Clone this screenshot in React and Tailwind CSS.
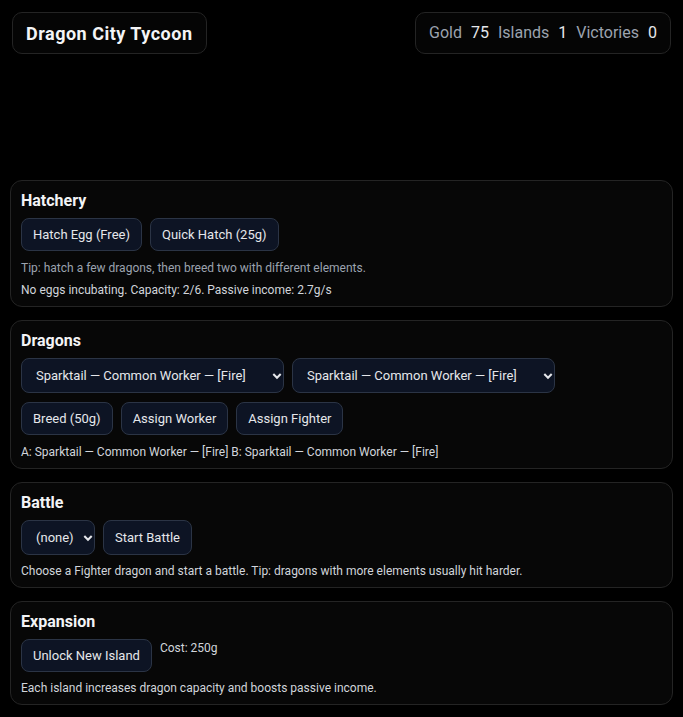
import React from 'react';

function Chevron() {
    return (
        <svg className="pointer-events-none absolute right-[2px] top-1/2 -translate-y-1/2" width="10" height="8" viewBox="0 0 10 8">
            <path d="M1.3 2 L5 5.8 L8.7 2" fill="none" stroke="#e5e7eb" strokeWidth="2" />
        </svg>
    );
}

function Select({ value, width }) {
    return (
        <div className={`relative ${width}`}>
            <select
                defaultValue={value}
                className="h-[35px] w-full appearance-none rounded-lg border border-[#2b3445] bg-[#0d1424] pl-[14px] pr-[14px] text-[13px] text-[#e5e7eb] outline-none"
            >
                <option>{value}</option>
            </select>
            <Chevron />
        </div>
    );
}

function Btn({ children, tall }) {
    return (
        <button className={`rounded-lg border border-[#2b3445] bg-[#0d1424] px-[11px] text-[13px] text-[#e5e7eb] ${tall ? 'h-[35px]' : 'h-[33px]'}`}>
            {children}
        </button>
    );
}

function Card({ title, children }) {
    return (
        <section className="rounded-xl border border-[#242424] bg-[#070707] px-[10px] pt-[10px] pb-[8px]">
            <h2 className="mb-[7px] text-[16px] font-bold leading-5 text-[#f3f4f6]">{title}</h2>
            {children}
        </section>
    );
}

export default function App() {
    const dragon = 'Sparktail — Common Worker — [Fire]';
    return (
        <div className="min-h-[717px] bg-black px-[10px] pb-[10px] text-[#e5e7eb]" style={{ fontFamily: 'Roboto, "Liberation Sans", sans-serif' }}>
            <header className="flex items-start justify-between px-[2px] pt-[12px]">
                <div className="flex h-[42px] items-center rounded-[10px] border border-[#242424] bg-[#050505] px-[13px]">
                    <h1 className="text-[18px] font-bold tracking-[0.5px] text-[#f3f4f6]">Dragon City Tycoon</h1>
                </div>
                <div className="flex h-[42px] items-center gap-[9px] rounded-[10px] border border-[#242424] bg-[#050505] px-[13px] text-[16px]">
                    <span className="text-[#9ca3af]">Gold</span>
                    <span className="text-[#e5e7eb]">75</span>
                    <span className="text-[#9ca3af]">Islands</span>
                    <span className="text-[#e5e7eb]">1</span>
                    <span className="text-[#9ca3af]">Victories</span>
                    <span className="text-[#e5e7eb]">0</span>
                </div>
            </header>

            <div className="h-[126px]" />

            <div className="flex flex-col gap-[13px]">
                <Card title="Hatchery">
                    <div className="flex gap-2">
                        <Btn>Hatch Egg (Free)</Btn>
                        <Btn>Quick Hatch (25g)</Btn>
                    </div>
                    <p className="mt-[9px] text-[12px] leading-4 text-[#9ca3af]">Tip: hatch a few dragons, then breed two with different elements.</p>
                    <p className="mt-[6px] text-[12px] leading-4 text-[#d1d5db]">No eggs incubating. Capacity: 2/6. Passive income: 2.7g/s</p>
                </Card>

                <Card title="Dragons">
                    <div className="flex gap-2">
                        <Select value={dragon} width="w-[263px]" />
                        <Select value={dragon} width="w-[263px]" />
                    </div>
                    <div className="mt-[9px] flex gap-2">
                        <Btn>Breed (50g)</Btn>
                        <Btn>Assign Worker</Btn>
                        <Btn>Assign Fighter</Btn>
                    </div>
                    <p className="mt-[9px] text-[12px] leading-4 text-[#d1d5db]">A: {dragon} B: {dragon}</p>
                </Card>

                <Card title="Battle">
                    <div className="flex gap-2">
                        <Select value="(none)" width="w-[74px]" />
                        <Btn tall>Start Battle</Btn>
                    </div>
                    <p className="mt-2 text-[12px] leading-4 text-[#d1d5db]">Choose a Fighter dragon and start a battle. Tip: dragons with more elements usually hit harder.</p>
                </Card>

                <Card title="Expansion">
                    <div className="flex items-start gap-2">
                        <Btn>Unlock New Island</Btn>
                        <span className="pt-[1px] text-[12px] leading-4 text-[#d1d5db]">Cost: 250g</span>
                    </div>
                    <p className="mt-2 text-[12px] leading-4 text-[#d1d5db]">Each island increases dragon capacity and boosts passive income.</p>
                </Card>
            </div>
        </div>
    );
}
